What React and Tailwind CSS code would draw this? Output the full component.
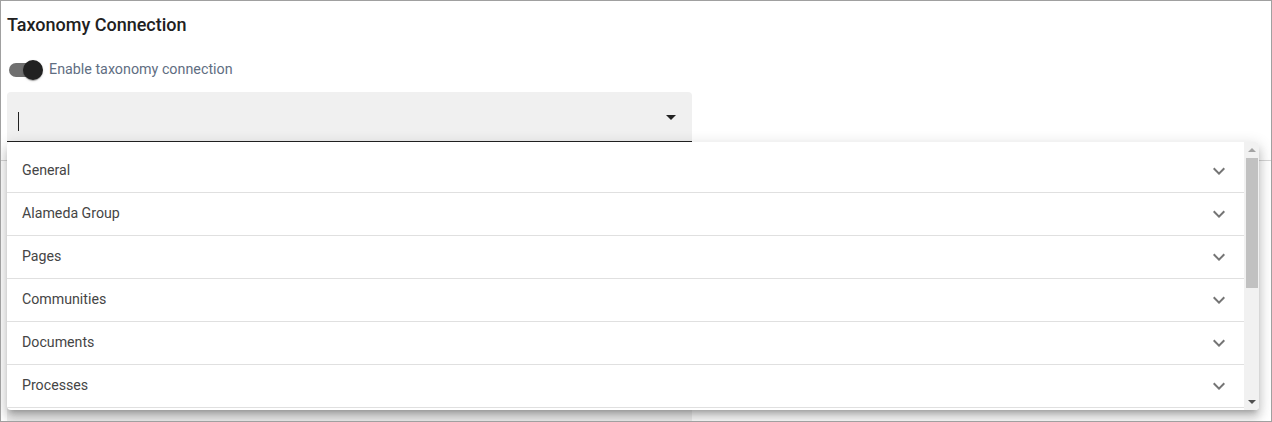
import React from 'react';

const items = ['General', 'Alameda Group', 'Pages', 'Communities', 'Documents', 'Processes'];

function ExpandMore() {
  return (
    <svg width="24" height="24" viewBox="0 0 24 24" className="fill-[#757575]">
      <path d="M16.59 8.59 12 13.17 7.41 8.59 6 10l6 6 6-6z" />
    </svg>
  );
}

function ArrowDropDown() {
  return (
    <svg width="24" height="24" viewBox="0 0 24 24" className="fill-[#222]">
      <path d="M7 10l5 5 5-5z" />
    </svg>
  );
}

function App() {
  return (
    <div className="relative w-[1272px] h-[422px] overflow-hidden border border-[#a0a0a0] bg-white font-['Roboto',_'Liberation_Sans',_sans-serif]">
      <div className="pl-[6px] pr-[6px]">
        <h2 className="pt-[13px] text-[18px] leading-[22px] font-medium text-[#212121]">Taxonomy Connection</h2>

        <div className="mt-[22px] flex items-center h-[24px]">
          <div className="relative w-[36px] h-[24px] flex items-center">
            <div className="ml-[2px] w-[32px] h-[14px] rounded-full bg-[#6f6f6f]" />
            <div className="absolute left-[16px] top-[2px] w-[20px] h-[20px] rounded-full bg-[#212121] shadow-[0_2px_1px_-1px_rgba(0,0,0,0.2),0_1px_1px_0_rgba(0,0,0,0.14),0_1px_3px_0_rgba(0,0,0,0.12)]" />
          </div>
          <span className="ml-[6px] text-[14.3px] text-[#5f6e82]">Enable taxonomy connection</span>
        </div>

        <div className="mt-[10px] w-[685px] h-[50px] bg-[#f0f0f0] rounded-t-[4px] border-b border-[#222] flex items-center pl-[11px] pr-[9px]">
          <div className="mt-[9px] w-px h-[19px] bg-[#222]" />
          <div className="ml-auto mt-[1px]">
            <ArrowDropDown />
          </div>
        </div>

        <div className="mt-[18px] -mx-[6px] border-b border-[#d6d6d6]" />

        <div className="mt-[234px] w-[685px] h-[50px] bg-[#f0f0f0] rounded-t-[4px]" />
      </div>

      <div className="absolute left-[6px] top-[141px] w-[1252px] h-[268px] bg-white rounded-[4px] overflow-hidden flex shadow-[0_5px_5px_-3px_rgba(0,0,0,0.2),0_8px_10px_1px_rgba(0,0,0,0.14),0_3px_14px_2px_rgba(0,0,0,0.12)]">
        <ul className="flex-1 pt-[8px]">
          {items.map((item) => (
            <li
              key={item}
              className="h-[43px] border-b border-[#e0e0e0] flex items-center pl-[15px] pr-[13px] text-[14.2px] text-[#454545]"
            >
              <span>{item}</span>
              <span className="ml-auto">
                <ExpandMore />
              </span>
            </li>
          ))}
        </ul>
        <div className="w-[15px] h-full bg-[#f1f1f1] flex flex-col items-center">
          <div className="h-[16px] flex items-center justify-center">
            <div className="w-0 h-0 border-l-[4px] border-r-[4px] border-b-[4px] border-l-transparent border-r-transparent border-b-[#a3a3a3]" />
          </div>
          <div className="w-[12px] h-[130px] bg-[#c1c1c1]" />
          <div className="mt-auto h-[16px] flex items-center justify-center">
            <div className="w-0 h-0 border-l-[4px] border-r-[4px] border-t-[4px] border-l-transparent border-r-transparent border-t-[#505050]" />
          </div>
        </div>
      </div>
    </div>
  );
}

export default App;
